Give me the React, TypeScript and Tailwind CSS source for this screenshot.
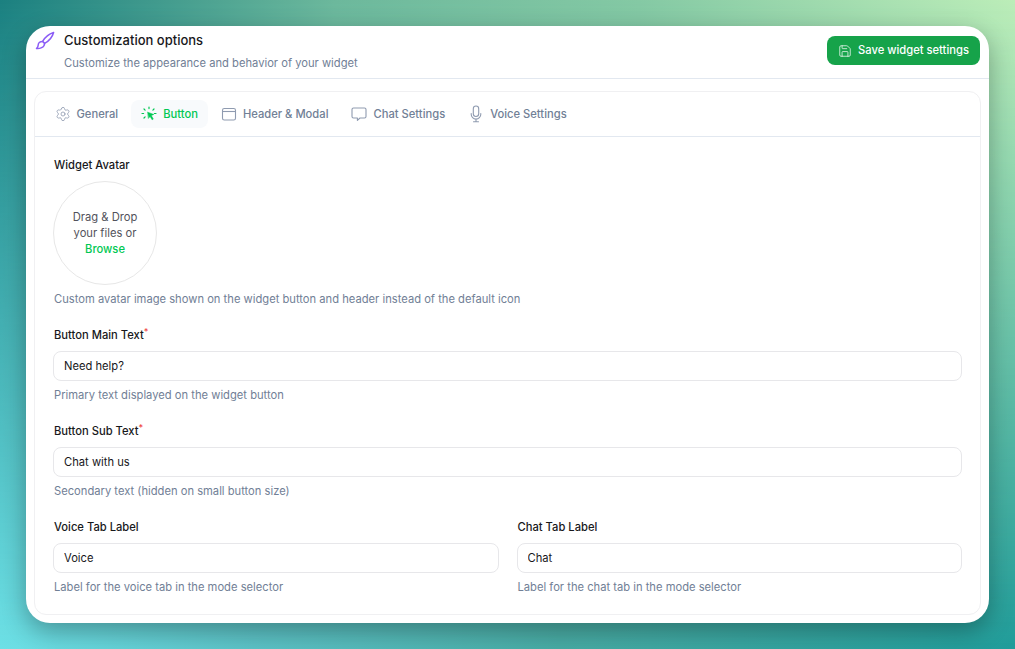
import { Save, Settings } from "lucide-react";
import type { ReactNode } from "react";

function Brush() {
  return (
    <svg viewBox="0 0 20 20" fill="none" stroke="currentColor" strokeWidth="1.5" strokeLinejoin="round" strokeLinecap="round" className="mt-[5px] h-5 w-5 shrink-0 text-[#8b5cf6]">
      <path d="M18.6 1.5C15 2.6 10.2 6 7.6 10.4l2 2C14 10 17.6 5.2 18.6 1.5Z" />
      <path d="M7.6 10.4C5.2 10.4 3.2 12 3.2 14c0 1.4-.6 2.6-1.7 3.5 3 .4 8-1 8.1-5.1" />
    </svg>
  );
}

function ClickIcon() {
  return (
    <svg viewBox="0 0 16 16" fill="none" stroke="currentColor" strokeWidth="1.2" strokeLinecap="round" className="h-4 w-4 shrink-0">
      <path d="M8 1v1.6M3 3l1.1 1.1M13 3l-1.1 1.1M1 7.5h1.6M13.4 7.5H15M3 12l1.1-1.1" />
      <path d="M6.8 6.2l6 2.3-2.5 1 2 3.6-1.2.7-2-3.4-1.5 1.8Z" fill="currentColor" strokeWidth="0.5" strokeLinejoin="round" />
    </svg>
  );
}

function WindowIcon() {
  return (
    <svg viewBox="0 0 16 16" fill="none" stroke="currentColor" strokeWidth="1.1" className="h-4 w-4 shrink-0">
      <rect x="1.5" y="2.5" width="13" height="11.5" rx="1.8" />
      <path d="M1.5 5.5h13" />
    </svg>
  );
}

function ChatIcon() {
  return (
    <svg viewBox="0 0 16 16" fill="none" stroke="currentColor" strokeWidth="1.1" strokeLinejoin="round" className="h-4 w-4 shrink-0">
      <path d="M2.5 2h11A1.5 1.5 0 0 1 15 3.5v7a1.5 1.5 0 0 1-1.5 1.5H9l-2.6 2.4V12H2.5A1.5 1.5 0 0 1 1 10.5v-7A1.5 1.5 0 0 1 2.5 2Z" />
    </svg>
  );
}

function MicIcon() {
  return (
    <svg viewBox="0 0 16 18" fill="none" stroke="currentColor" strokeWidth="1.1" strokeLinecap="round" className="h-[18px] w-4 shrink-0">
      <rect x="5.3" y="1" width="5.4" height="10.5" rx="2.7" />
      <path d="M3.2 8.5v.8a4.8 4.8 0 0 0 9.6 0v-.8M8 14.2v2.6M5.5 16.8h5" />
    </svg>
  );
}

const tabs: { label: string; icon: ReactNode; active?: boolean }[] = [
  { label: "General", icon: <Settings className="h-4 w-4 shrink-0" strokeWidth={1.2} /> },
  { label: "Button", icon: <ClickIcon />, active: true },
  { label: "Header & Modal", icon: <WindowIcon /> },
  { label: "Chat Settings", icon: <ChatIcon /> },
  { label: "Voice Settings", icon: <MicIcon /> },
];

function Field({ label, value, hint, required }: { label: string; value: string; hint: string; required?: boolean }) {
  return (
    <div className="flex min-w-0 flex-1 flex-col">
      <div className="mb-[7px] flex h-[18px] items-center pl-px text-[11.2px] font-medium text-[#18181b]">
        {label}
        {required && <span className="relative -top-1 text-[9px] leading-none text-[#ef4444]">*</span>}
      </div>
      <input
        readOnly
        value={value}
        className="h-[30px] w-full rounded-lg border border-[#e7e7ea] bg-white px-[10px] text-[11.2px] text-[#18181b] outline-none"
      />
      <p className="mt-[5px] h-[18px] pl-px text-[11.2px] leading-[18px] text-[#718096]">{hint}</p>
    </div>
  );
}

export default function App() {
  return (
    <div className="relative flex h-[649px] w-[1015px] overflow-hidden bg-[linear-gradient(to_right,#6de0e6_0%,#5cc2c6_25%,#48aba4_55%,#209c9a_100%)] pl-[26px] pt-[26px] font-['Inter',sans-serif]">
      <div className="absolute inset-0 bg-[linear-gradient(to_right,#1b8080_0%,#6cb89c_33%,#85c9a4_63%,#bcedb8_100%)] [mask-image:linear-gradient(to_bottom,black,transparent)]" />
      <div className="relative flex h-[597px] w-[963px] flex-col rounded-[24px] bg-white shadow-[0_8px_24px_rgba(0,0,0,0.3)]">
        <header className="flex h-[53px] shrink-0 justify-between border-b border-[#e2e8f0] px-[9px]">
          <div className="flex gap-[9px]">
            <Brush />
            <div>
              <h1 className="mt-[5px] text-[13px] font-medium leading-[18px] text-[#18181b]">Customization options</h1>
              <p className="mt-[5px] text-[11.2px] leading-[18px] text-[#718096]">
                Customize the appearance and behavior of your widget
              </p>
            </div>
          </div>
          <button className="mt-[10px] flex h-[29px] w-[153px] items-center justify-center gap-[6px] rounded-lg bg-[#16a34a] text-[11.2px] font-medium text-white">
            <Save className="h-[14px] w-[14px]" strokeWidth={1.25} />
            Save widget settings
          </button>
        </header>

        <div className="mx-2 mb-2 mt-3 flex flex-1 flex-col rounded-xl border border-[#f0f0f2]">
          <nav className="flex h-[45px] shrink-0 items-center gap-[3px] border-b border-[#e2e8f0] pl-[9.5px] pr-[10px]">
            {tabs.map((t) => (
              <div
                key={t.label}
                className={`flex h-[28px] items-center gap-[6px] rounded-lg px-[10px] text-[11.2px] font-medium ${
                  t.active ? "bg-[#f8fafc] text-[#00c853]" : "text-[#718096]"
                }`}
              >
                <span className={`flex w-4 justify-center ${t.active ? "" : "text-[#8f9bb0]"}`}>{t.icon}</span>
                {t.label}
              </div>
            ))}
          </nav>

          <div className="flex flex-col px-[18px] pt-[19px]">
            <div className="pl-px text-[11.2px] font-medium leading-[18px] text-[#18181b]">Widget Avatar</div>
            <div className="mt-[7px] flex h-[104px] w-[104px] flex-col items-center justify-center rounded-full border border-[#e7e7e7] text-center text-[11.2px] leading-4 text-[#52525b]">
              <span>Drag &amp; Drop</span>
              <span>your files or</span>
              <span className="font-medium text-[#00c853]">Browse</span>
            </div>
            <p className="mb-[18px] mt-[5px] h-[18px] pl-px text-[11.2px] leading-[18px] text-[#718096]">
              Custom avatar image shown on the widget button and header instead of the default icon
            </p>
            <div className="flex flex-col gap-[18px]">
              <Field label="Button Main Text" value="Need help?" hint="Primary text displayed on the widget button" required />
              <Field label="Button Sub Text" value="Chat with us" hint="Secondary text (hidden on small button size)" required />
              <div className="flex gap-[18px]">
                <Field label="Voice Tab Label" value="Voice" hint="Label for the voice tab in the mode selector" />
                <Field label="Chat Tab Label" value="Chat" hint="Label for the chat tab in the mode selector" />
              </div>
            </div>
          </div>
        </div>
      </div>
    </div>
  );
}
